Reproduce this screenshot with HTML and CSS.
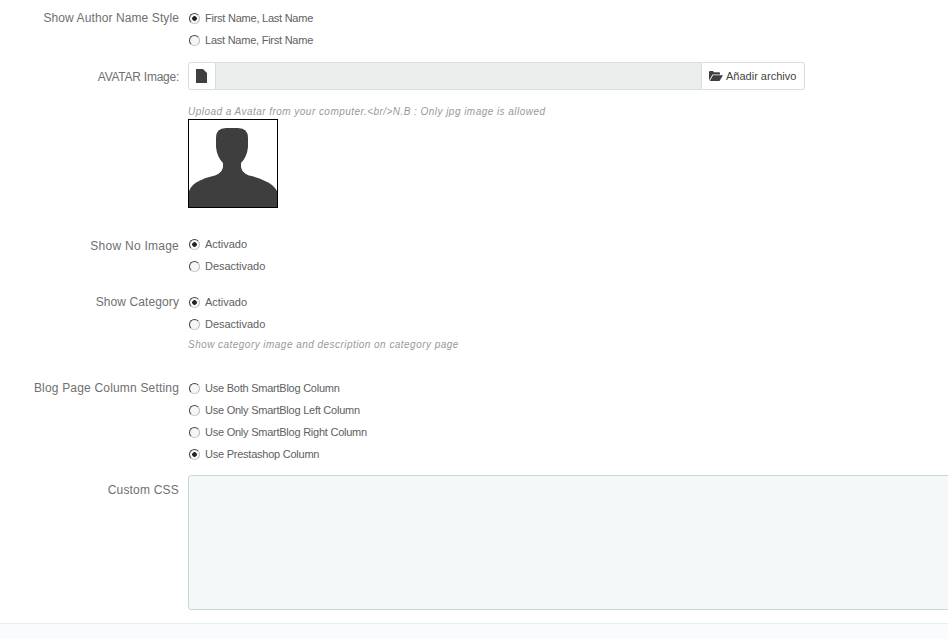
FILE: index.html
```html
<!DOCTYPE html>
<html lang="es">
<head>
<meta charset="utf-8">
<title>SmartBlog settings</title>
<link rel="stylesheet" href="styles.css">
</head>
<body>
<main class="form">
  <section class="row">
    <div class="label">Show Author Name Style</div>
    <div class="control">
      <div class="radio"><span class="dot on"></span>First Name, Last Name</div>
      <div class="radio"><span class="dot"></span>Last Name, First Name</div>
    </div>
  </section>
  <section class="row row-file">
    <div class="label label-file">AVATAR Image:</div>
    <div class="control">
      <div class="file">
        <span class="addon">
          <svg width="11" height="14" viewBox="0 0 11 14"><path d="M0 0h7l4 4v10H0z" fill="#3f3f3f"/></svg>
        </span>
        <span class="file-name"></span>
        <span class="file-btn">
          <svg width="14" height="10" viewBox="0 0 14 10"><path d="M0 9.500V1q0-1 1-1h3l1 1.300h5q1 0 1 1V3.500H3.500L0 9.500zM4 4.300H14L10.500 10H.8z" fill="#3f3f3f"/></svg>
          Añadir archivo
        </span>
      </div>
      <p class="help help-upload">Upload a Avatar from your computer.&lt;br/&gt;N.B : Only jpg image is allowed</p>
      <div class="avatar">
        <svg width="88" height="87" viewBox="0 0 88 87"><path d="M0 87V71Q3 64 10 61 18 57 26 55.500 33 53 34 47V43Q28 37 27 27V18Q27 8 37 8H49Q59 8 59 18V27Q58 37 52 43V47Q53 53 60 55.500 68 57 76 61 84 64 88 71V87z" fill="#3e3e3e"/></svg>
      </div>
    </div>
  </section>
  <section class="row row-noimage">
    <div class="label label-noimage">Show No Image</div>
    <div class="control">
      <div class="radio radio-short"><span class="dot on"></span>Activado</div>
      <div class="radio radio-short"><span class="dot"></span>Desactivado</div>
    </div>
  </section>
  <section class="row row-category">
    <div class="label">Show Category</div>
    <div class="control">
      <div class="radio radio-short"><span class="dot on"></span>Activado</div>
      <div class="radio radio-short"><span class="dot"></span>Desactivado</div>
      <p class="help help-category">Show category image and description on category page</p>
    </div>
  </section>
  <section class="row row-column">
    <div class="label label-column">Blog Page Column Setting</div>
    <div class="control">
      <div class="radio"><span class="dot"></span>Use Both SmartBlog Column</div>
      <div class="radio"><span class="dot"></span>Use Only SmartBlog Left Column</div>
      <div class="radio"><span class="dot"></span>Use Only SmartBlog Right Column</div>
      <div class="radio"><span class="dot on"></span>Use Prestashop Column</div>
    </div>
  </section>
  <section class="row row-css">
    <div class="label label-css">Custom CSS</div>
    <div class="control">
      <div class="textarea"></div>
    </div>
  </section>
</main>
<footer class="footer"></footer>
</body>
</html>
```
FILE: styles.css
```css
html, body {
  margin: 0;
  padding: 0;
  height: 639px;
  overflow: hidden;
  background: #fff;
  font-family: "Liberation Sans", Arial, sans-serif;
}
.form {
  height: 623px;
  padding-top: 7px;
  box-sizing: border-box;
}
.row {
  display: grid;
  grid-template-columns: 179px 1100px;
  column-gap: 9px;
}
.label {
  text-align: right;
  font-size: 12px;
  letter-spacing: .1px;
  line-height: 22px;
  color: #707070;
}
.radio {
  display: flex;
  align-items: center;
  height: 22px;
  font-size: 11px;
  letter-spacing: -.24px;
  color: #606060;
}
.radio-short { letter-spacing: -.02px; }
.dot {
  width: 11px;
  height: 11px;
  margin: 0 5px 0 1px;
  box-sizing: border-box;
  border-radius: 50%;
  border: 1px solid #777;
  border-top-color: #444;
  border-left-color: #444;
  border-bottom-color: #ccc;
  border-right-color: #bbb;
  background: #f6f6f6;
}
.dot.on {
  background: radial-gradient(circle, #222 0, #222 2px, #f6f6f6 2.6px);
}
.row-file { margin-top: 11px; }
.label-file { padding-top: 4px; letter-spacing: -.25px; }
.control { min-width: 0; }
.file {
  display: flex;
  width: 617px;
  height: 28px;
  box-sizing: border-box;
}
.addon {
  width: 28px;
  box-sizing: border-box;
  display: flex;
  align-items: center;
  justify-content: center;
  padding-right: 1px;
  background: #fff;
  border: 1px solid #d3dfe3;
  border-radius: 3px 0 0 3px;
}
.file-name {
  flex: 1;
  background: #eceeee;
  border: 1px solid #d3dfe3;
  border-left: 0;
  border-right: 0;
}
.file-btn {
  width: 104px;
  box-sizing: border-box;
  display: flex;
  align-items: center;
  gap: 3px;
  padding-left: 7px;
  background: #fff;
  border: 1px solid #dcdcdc;
  border-radius: 0 3px 3px 0;
  font-size: 11px;
  color: #444;
}
.help {
  margin: 0;
  font-size: 10px;
  font-style: italic;
  letter-spacing: .46px;
  line-height: 14px;
  color: #999;
}
.help-upload { margin-top: 15px; }
.avatar {
  width: 90px;
  height: 89px;
  box-sizing: border-box;
  border: 1px solid #000;
  line-height: 0;
}
.row-noimage { margin-top: 25px; }
.label-noimage { padding-top: 2px; letter-spacing: .25px; }
.row-category { margin-top: 14px; }
.help-category { margin-top: 3px; }
.row-column { margin-top: 25px; }
.label-column { letter-spacing: .18px; }
.row-css { margin-top: 10px; }
.label-css { padding-top: 4px; letter-spacing: .2px; }
.textarea {
  height: 135px;
  box-sizing: border-box;
  background: #f4f8f9;
  border: 1px solid #c9d6da;
  border-radius: 3px;
}
.footer {
  height: 16px;
  box-sizing: border-box;
  background: #fafbfc;
  border-top: 1px solid #e8ecee;
}
```
